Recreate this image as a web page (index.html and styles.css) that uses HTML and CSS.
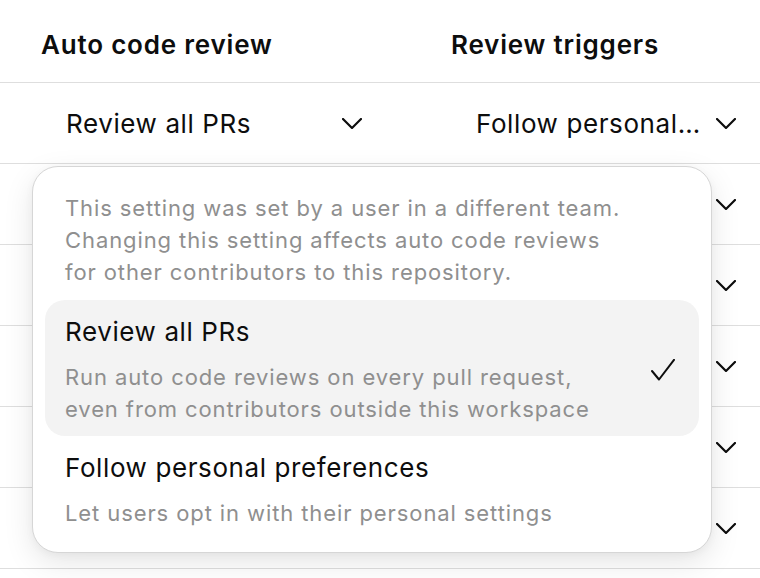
FILE: index.html
```html
<!DOCTYPE html>
<html>
<head>
<meta charset="utf-8">
<link rel="stylesheet" href="styles.css">
</head>
<body>
<div class="table">
  <div class="row head">
    <div class="th">Auto code review</div>
    <div class="th">Review triggers</div>
  </div>
  <div class="row">
    <div class="select"><span class="val">Review all PRs</span><svg class="chev" viewBox="0 0 20 11"><path d="M1 1 L10 10 L19 1"/></svg></div>
    <div class="select"><span class="val">Follow personal…</span><svg class="chev" viewBox="0 0 20 11"><path d="M1 1 L10 10 L19 1"/></svg></div>
  </div>
  <div class="row">
    <div class="select"><span class="val"></span><svg class="chev" viewBox="0 0 20 11"><path d="M1 1 L10 10 L19 1"/></svg></div>
    <div class="select"><span class="val"></span><svg class="chev" viewBox="0 0 20 11"><path d="M1 1 L10 10 L19 1"/></svg></div>
  </div>
  <div class="row">
    <div class="select"><span class="val"></span><svg class="chev" viewBox="0 0 20 11"><path d="M1 1 L10 10 L19 1"/></svg></div>
    <div class="select"><span class="val"></span><svg class="chev" viewBox="0 0 20 11"><path d="M1 1 L10 10 L19 1"/></svg></div>
  </div>
  <div class="row">
    <div class="select"><span class="val"></span><svg class="chev" viewBox="0 0 20 11"><path d="M1 1 L10 10 L19 1"/></svg></div>
    <div class="select"><span class="val"></span><svg class="chev" viewBox="0 0 20 11"><path d="M1 1 L10 10 L19 1"/></svg></div>
  </div>
  <div class="row">
    <div class="select"><span class="val"></span><svg class="chev" viewBox="0 0 20 11"><path d="M1 1 L10 10 L19 1"/></svg></div>
    <div class="select"><span class="val"></span><svg class="chev" viewBox="0 0 20 11"><path d="M1 1 L10 10 L19 1"/></svg></div>
  </div>
  <div class="row">
    <div class="select"><span class="val"></span><svg class="chev" viewBox="0 0 20 11"><path d="M1 1 L10 10 L19 1"/></svg></div>
    <div class="select"><span class="val"></span><svg class="chev" viewBox="0 0 20 11"><path d="M1 1 L10 10 L19 1"/></svg></div>
  </div>
</div>

<div class="menu">
  <p class="note">This setting was set by a user in a different team.<br>Changing this setting affects auto code reviews<br>for other contributors to this repository.</p>
  <div class="item selected">
    <div class="item-text">
      <div class="item-title">Review all PRs</div>
      <div class="item-desc">Run auto code reviews on every pull request,<br>even from contributors outside this workspace</div>
    </div>
    <svg class="check" viewBox="0 0 24 24"><path d="M1 12 L8 20.5 L23 0.8"/></svg>
  </div>
  <div class="item">
    <div class="item-text">
      <div class="item-title">Follow personal preferences</div>
      <div class="item-desc">Let users opt in with their personal settings</div>
    </div>
  </div>
</div>
</body>
</html>
```

FILE: styles.css
```css
* { box-sizing: border-box; }
html, body {
  margin: 0;
  padding: 0;
  background: #ffffff;
  overflow: hidden;
}
body {
  font-family: Inter, "Noto Sans", sans-serif;
  color: #0d0d0d;
  position: relative;
  width: 760px;
  height: 578px;
}
.table {
  width: 760px;
}
.row {
  display: grid;
  grid-template-columns: 335px 299px;
  column-gap: 75px;
  padding-left: 41px;
  height: 81px;
  border-bottom: 1px solid #dedede;
}
.row.head {
  height: 83px;
  align-items: end;
  padding-bottom: 21px;
}
.th {
  font-size: 26px;
  font-weight: 600;
  line-height: 32px;
  letter-spacing: 0.8px;
}
.select {
  display: flex;
  align-items: center;
  gap: 14px;
  padding-left: 25px;
  padding-right: 14px;
  font-size: 26px;
  letter-spacing: 0.6px;
}
.val {
  flex: 1;
  min-width: 0;
  white-space: nowrap;
  overflow: hidden;
  text-overflow: ellipsis;
}
.chev {
  width: 20px;
  height: 11px;
  flex: none;
  fill: none;
  stroke: #0d0d0d;
  stroke-width: 2.2;
  stroke-linecap: round;
  stroke-linejoin: round;
}
.menu {
  position: absolute;
  left: 32px;
  top: 166px;
  width: 680px;
  padding: 12px;
  background: #fff;
  border: 1px solid #d6d6d6;
  border-radius: 26px;
  box-shadow: 0 10px 30px rgba(0,0,0,0.10), 0 2px 8px rgba(0,0,0,0.04);
}
.note {
  margin: 0;
  padding: 13px 20px 12px;
  font-size: 22px;
  line-height: 32px;
  letter-spacing: 0.9px;
  color: #8f8f8f;
}
.item {
  display: flex;
  align-items: center;
  justify-content: space-between;
  padding: 16px 24px 11px 20px;
  border-radius: 20px;
}
.item.selected {
  background: #f3f3f3;
}
.item-title {
  font-size: 26px;
  line-height: 32px;
  letter-spacing: 0.6px;
  color: #0d0d0d;
}
.item-desc {
  margin-top: 13px;
  font-size: 22px;
  line-height: 32px;
  letter-spacing: 0.9px;
  color: #8f8f8f;
}
.check {
  width: 24px;
  height: 24px;
  fill: none;
  stroke: #0d0d0d;
  stroke-width: 2;
  stroke-linecap: round;
  stroke-linejoin: round;
}
```
